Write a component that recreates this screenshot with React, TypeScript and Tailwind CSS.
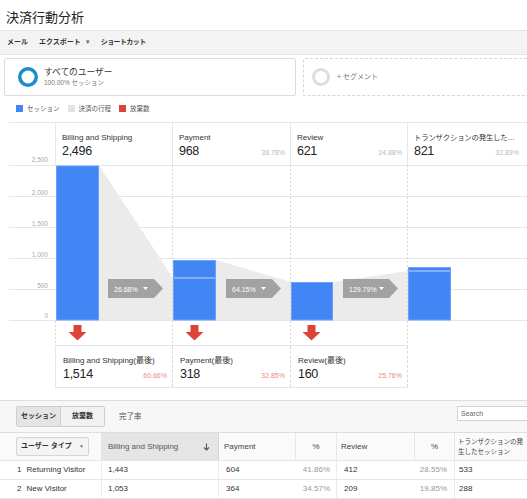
import React from "react";

const F = "'Liberation Sans','Noto Sans CJK JP',sans-serif";

function Ring({ color, size, stroke }: { color: string; size: number; stroke: number }) {
  const r = (size - stroke) / 2;
  return (
    <svg width={size} height={size} viewBox={`0 0 ${size} ${size}`}>
      <circle cx={size / 2} cy={size / 2} r={r} fill="none" stroke={color} strokeWidth={stroke} />
    </svg>
  );
}

function Chart() {
  const grid = [0.5, 31.5, 62.5, 93.5, 124.5, 155.5];
  const labels = [
    { t: "2,000", y: 29.5 },
    { t: "1,500", y: 60.5 },
    { t: "1,000", y: 91.5 },
    { t: "500", y: 122.5 },
    { t: "0", y: 153 },
  ];
  const arrows = [
    { x: 108, t: "26.68%", tri: 143 },
    { x: 226, t: "64.15%", tri: 261 },
    { x: 343, t: "129.79%", tri: 379 },
  ];
  const reds = [77.5, 194.5, 311.5];
  return (
    <svg width={527} height={180} viewBox="0 0 527 180" className="block">
      {grid.map((y) => (
        <line key={y} x1={9} x2={527} y1={y} y2={y} stroke="#e6e6e6" strokeWidth={1} />
      ))}
      {labels.map((l) => (
        <text key={l.t} x={48} y={l.y} textAnchor="end" fontSize={6.5} fill="#aaa" fontFamily={F}>
          {l.t}
        </text>
      ))}
      <polygon points="99,0.5 173,113 173,155 99,155" fill="#ebebeb" />
      <polygon points="216,95 291,117 291,155 216,155" fill="#ebebeb" />
      <polygon points="333,117 408,106 408,155 333,155" fill="#ebebeb" />
      {[172.5, 290.5, 407.5].map((x) => (
        <line key={x} x1={x} x2={x} y1={0} y2={180} stroke="#d9d9d9" strokeDasharray="2,2" />
      ))}
      <line x1={55.5} x2={55.5} y1={156} y2={180} stroke="#d9d9d9" strokeDasharray="2,2" />
      <rect x={56.5} y={1} width={42} height={154} fill="#4285f4" stroke="#6aa2f8" />
      <rect x={173.5} y={95.5} width={42} height={59.5} fill="#4285f4" stroke="#6aa2f8" />
      <line x1={174} x2={215} y1={113} y2={113} stroke="#c2d8fc" />
      <rect x={291.5} y={117.5} width={41} height={37.5} fill="#4285f4" stroke="#6aa2f8" />
      <rect x={408.5} y={102.5} width={42} height={52.5} fill="#4285f4" stroke="#6aa2f8" />
      <line x1={409} x2={450} y1={106} y2={106} stroke="#c2d8fc" />
      {arrows.map((a) => (
        <g key={a.t}>
          <polygon
            points={`${a.x},114 ${a.x + 46},114 ${a.x + 55},123.5 ${a.x + 46},133 ${a.x},133`}
            fill="#a2a2a2"
          />
          <text x={a.x + 6} y={126.5} fontSize={7} fill="#fff" fontFamily={F}>
            {a.t}
          </text>
          <polygon points={`${a.tri},122 ${a.tri + 5},122 ${a.tri + 2.5},125`} fill="#fff" />
        </g>
      ))}
      {reds.map((cx) => (
        <g key={cx}>
          <rect x={cx - 4} y={160} width={8} height={7.5} fill="#dc4437" />
          <polygon points={`${cx - 9},167 ${cx + 9},167 ${cx},175.5`} fill="#dc4437" />
        </g>
      ))}
    </svg>
  );
}

const headers = [
  { name: "Billing and Shipping", value: "2,496", pct: "", w: "w-[117px]", cls: "text-[8px]" },
  { name: "Payment", value: "968", pct: "38.78%", w: "w-[118px]", cls: "text-[8px]" },
  { name: "Review", value: "621", pct: "24.88%", w: "w-[117px]", cls: "text-[8px]" },
  {
    name: "トランザクションの発生したセッション",
    value: "821",
    pct: "32.89%",
    w: "w-[117px]",
    cls: "text-[7.4px] tracking-[-0.2px]",
  },
];

const exits = [
  { name: "Billing and Shipping(最後)", value: "1,514", pct: "60.66%", w: "w-[117px]" },
  { name: "Payment(最後)", value: "318", pct: "32.85%", w: "w-[118px]" },
  { name: "Review(最後)", value: "160", pct: "25.76%", w: "w-[117px]" },
];

const rows = [
  ["1", "Returning Visitor", "1,443", "604", "41.86%", "412", "28.55%", "533"],
  ["2", "New Visitor", "1,053", "364", "34.57%", "209", "19.85%", "288"],
];

export default function App() {
  return (
    <div className="w-[527px] h-[499px] overflow-hidden bg-white text-[#333] font-['Liberation_Sans','Noto_Sans_CJK_JP',sans-serif]">
      {/* Title */}
      <div className="h-[30px] pt-[10px] pl-[6px] text-[13px] leading-[16px] text-[#222]">決済行動分析</div>

      {/* Toolbar */}
      <div className="h-[25px] bg-[#f3f3f3] border-y border-[#e4e4e4] flex items-center text-[7px] font-bold text-[#333]">
        <span className="ml-[7px]">メール</span>
        <span className="ml-[11px] flex items-center">
          エクスポート
          <span className="ml-[4px] text-[6px] text-[#666]">▼</span>
        </span>
        <span className="ml-[10px] tracking-[-0.6px]">ショートカット</span>
      </div>

      {/* Segments */}
      <div className="mt-[3px] h-[38px] flex px-[4px] gap-[7px]">
        <div className="w-[292px] border border-[#dcdcdc] rounded-[2px] flex items-center pl-[13px]">
          <Ring color="#1a8dcc" size={20} stroke={3.5} />
          <div className="ml-[6px] flex flex-col">
            <span className="text-[8.7px] leading-[11px] text-[#333]">すべてのユーザー</span>
            <span className="text-[6.5px] leading-[9px] text-[#777]">100.00% セッション</span>
          </div>
        </div>
        <div className="flex-1 mr-[-6px] border border-dashed border-[#d6d6d6] rounded-[2px] flex items-center pl-[8px]">
          <Ring color="#dedede" size={18} stroke={3} />
          <span className="ml-[7px] text-[7px] text-[#777]">+ セグメント</span>
        </div>
      </div>

      {/* Legend */}
      <div className="h-[26px] pt-[9px] pl-[16px] flex items-start text-[6.5px] leading-[8px] text-[#555]">
        <span className="w-[7px] h-[7px] bg-[#4285f4]" />
        <span className="ml-[4px]">セッション</span>
        <span className="ml-[8px] w-[7px] h-[7px] bg-[#e3e3e3]" />
        <span className="ml-[4px]">決済の行程</span>
        <span className="ml-[8px] w-[7px] h-[7px] bg-[#dc4437]" />
        <span className="ml-[4px]">放棄数</span>
      </div>

      {/* Chart header */}
      <div className="ml-[9px] w-[518px] h-[43px] border-t border-[#e6e6e6] flex">
        <div className="w-[46px] flex items-end justify-end pr-[7px] pb-[1px] text-[6.5px] leading-[8px] text-[#aaa]">
          2,500
        </div>
        {headers.map((h) => (
          <div key={h.value} className={`${h.w} border-l border-[#e6e6e6] pl-[6px] pr-[5px] pt-[10px]`}>
            <div className={`${h.cls} leading-[10px] text-[#333] truncate`}>{h.name}</div>
            <div className="mt-[1px] flex items-baseline justify-between">
              <span className="text-[12.5px] leading-[14px] text-[#222] tracking-[-0.3px]">{h.value}</span>
              <span className="text-[7px] text-[#bbb]">{h.pct}</span>
            </div>
          </div>
        ))}
      </div>

      <Chart />

      {/* Exit boxes */}
      <div className="ml-[55px] w-[353px] h-[43px] border-y border-l border-[#e6e6e6] flex">
        {exits.map((e) => (
          <div key={e.value} className={`${e.w} border-r border-dashed border-[#d9d9d9] pl-[7px] pr-[5px] pt-[10px]`}>
            <div className="text-[8px] leading-[10px] text-[#333] truncate">{e.name}</div>
            <div className="mt-[1px] flex items-baseline justify-between">
              <span className="text-[12.5px] leading-[14px] text-[#222] tracking-[-0.3px]">{e.value}</span>
              <span className="text-[7px] text-[#ec8a80]">{e.pct}</span>
            </div>
          </div>
        ))}
      </div>

      {/* Table */}
      <div className="mt-[12px] border-t border-[#dedede]">
        <div className="h-[31px] bg-[#f7f7f7] flex items-center pl-[16px]">
          <div className="flex h-[21px] border border-[#cfcfcf] rounded-[2px] text-[7px] font-bold text-[#333]">
            <div className="w-[44px] bg-[#e4e4e4] flex items-center justify-center border-r border-[#cfcfcf]">セッション</div>
            <div className="w-[43px] bg-[#f1f1f1] flex items-center justify-center">放棄数</div>
          </div>
          <span className="ml-[14px] text-[7.5px] text-[#555]">完了率</span>
          <div className="ml-auto mr-[-4px] self-start mt-[5px] w-[74px] h-[15px] border border-[#d3d3d3] bg-white text-[7px] leading-[13px] pl-[3px] text-[#666]">
            Search
          </div>
        </div>

        <div className="grid grid-cols-[102px_117px_77px_41px_78px_40px_72px] h-[28px] border-t border-[#dedede] bg-[#fafafa] text-[8px] text-[#444]">
          <div className="border-r border-[#e6e6e6] flex items-center pl-[16px]">
            <div className="w-[73px] h-[19px] border border-[#d5d5d5] bg-[#f4f4f4] rounded-[2px] flex items-center justify-between px-[4px] text-[7px] font-bold text-[#333]">
              <span>ユーザー タイプ</span>
              <span className="text-[5px] text-[#777]">▼</span>
            </div>
          </div>
          <div className="bg-[#e5e5e5] border-r border-[#d6d6d6] flex items-center justify-between pl-[6px] pr-[8px] text-[#555]">
            <span>Billing and Shipping</span>
            <svg width="7" height="8" viewBox="0 0 7 8">
              <path d="M3.5 0.5 V7 M1 4.5 L3.5 7 L6 4.5" stroke="#555" strokeWidth="1.1" fill="none" />
            </svg>
          </div>
          <div className="border-r border-[#e6e6e6] flex items-center pl-[5px]">Payment</div>
          <div className="border-r border-[#e6e6e6] flex items-center justify-center">%</div>
          <div className="border-r border-[#e6e6e6] flex items-center pl-[4px]">Review</div>
          <div className="border-r border-[#e6e6e6] flex items-center justify-center">%</div>
          <div className="flex items-center pl-[3px] text-[6.5px] leading-[10px]">
            <span>
              トランザクションの発
              <br />
              生したセッション
            </span>
          </div>
        </div>

        {rows.map((r) => (
          <div
            key={r[0]}
            className="grid grid-cols-[102px_117px_77px_41px_78px_40px_72px] h-[19px] border-t border-[#e6e6e6] text-[8px] text-[#333]"
          >
            <div className="border-r border-[#ececec] flex items-center pl-[17px]">
              <span>{r[0]}</span>
              <span className="ml-[5px]">{r[1]}</span>
            </div>
            <div className="border-r border-[#ececec] flex items-center pl-[6px]">{r[2]}</div>
            <div className="flex items-center pl-[7px]">{r[3]}</div>
            <div className="border-r border-[#ececec] flex items-center justify-end pr-[6px] text-[#999]">{r[4]}</div>
            <div className="flex items-center pl-[7px]">{r[5]}</div>
            <div className="border-r border-[#ececec] flex items-center justify-end pr-[7px] text-[#999]">{r[6]}</div>
            <div className="flex items-center pl-[4px]">{r[7]}</div>
          </div>
        ))}
        <div className="border-t border-[#e6e6e6]" />
      </div>
    </div>
  );
}
